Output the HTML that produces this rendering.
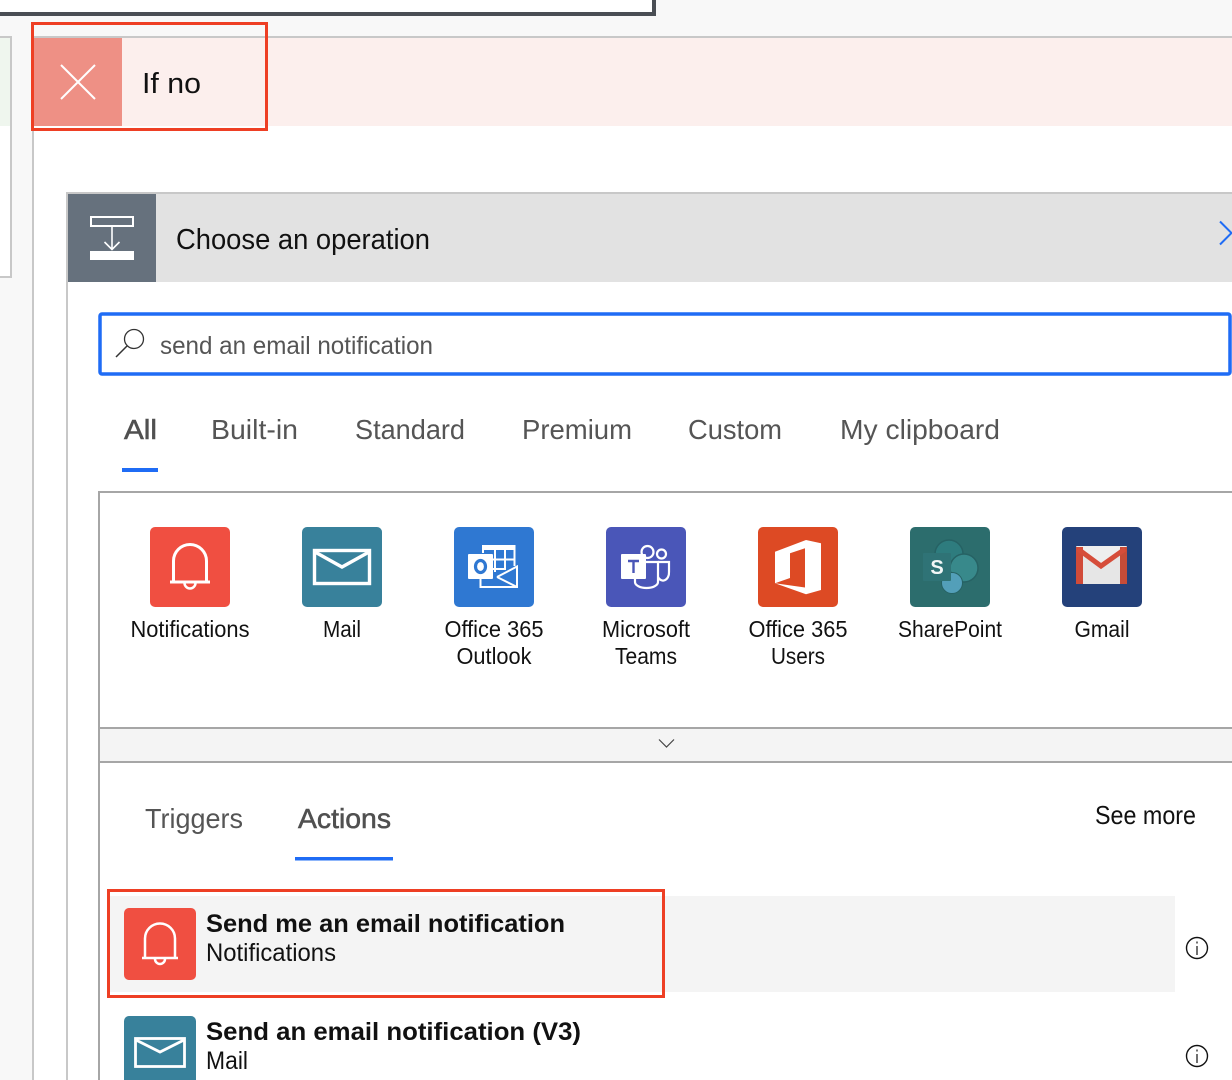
<!DOCTYPE html>
<html><head><meta charset="utf-8"><style>
html,body{margin:0;padding:0;background:#fff;width:1232px;height:1080px;overflow:hidden}
svg{display:block}
text{font-family:"Liberation Sans",sans-serif;fill:#111}
.g{fill:#555}
.sb{fill:#505050;stroke:#505050;stroke-width:.55}
.i{fill:none;stroke:#fff;stroke-width:3}
</style></head><body>
<svg width="1232" height="1080" viewBox="0 0 1232 1080" xmlns="http://www.w3.org/2000/svg">
<rect width="1232" height="1080" fill="#fff"/>
<!-- canvas -->
<rect x="0" y="16" width="34" height="1064" fill="#f8f8f8"/>
<rect x="0" y="16" width="1232" height="22" fill="#f8f8f8"/>
<rect x="656" y="0" width="576" height="38" fill="#f8f8f8"/>
<rect x="0" y="12" width="656" height="4" fill="#4a4e54"/>
<rect x="652" y="0" width="4" height="16" fill="#4a4e54"/>
<!-- left panel -->
<rect x="0" y="38" width="10" height="238" fill="#fff"/>
<rect x="0" y="38" width="10" height="88" fill="#eff6ee"/>
<rect x="0" y="36" width="12" height="2" fill="#c8c8c8"/>
<rect x="10" y="36" width="2" height="242" fill="#c8c8c8"/>
<rect x="0" y="276" width="12" height="2" fill="#c8c8c8"/>
<!-- if no panel -->
<rect x="34" y="38" width="1198" height="1042" fill="#fff"/>
<rect x="34" y="38" width="1198" height="88" fill="#fcefed"/>
<rect x="32" y="36" width="1200" height="2" fill="#c8c8c8"/>
<rect x="32" y="36" width="2" height="1044" fill="#c8c8c8"/>
<rect x="34" y="38" width="88" height="88" fill="#ee9085"/>
<path d="M61 65L95 99M95 65L61 99" stroke="#fff" stroke-width="2" fill="none"/>
<text x="142" y="93" font-size="29" textLength="59" lengthAdjust="spacingAndGlyphs">If no</text>
<!-- operation card -->
<rect x="66" y="192" width="1166" height="2" fill="#c8c8c8"/>
<rect x="66" y="192" width="2" height="888" fill="#c8c8c8"/>
<rect x="68" y="194" width="1164" height="88" fill="#e2e2e2"/>
<rect x="68" y="194" width="88" height="88" fill="#66717d"/>
<rect x="91" y="217" width="42" height="9" fill="none" stroke="#fff" stroke-width="2"/>
<path d="M112 227V249M104.500 242L112 249.500L119.500 242" fill="none" stroke="#fff" stroke-width="1.600"/>
<rect x="90" y="251" width="44" height="9" fill="#fff"/>
<text x="176" y="249" font-size="29" textLength="254" lengthAdjust="spacingAndGlyphs">Choose an operation</text>
<path d="M1220 221.500L1231.500 233L1220 244.500" fill="none" stroke="#1f6cf5" stroke-width="2"/>
<!-- search -->
<rect x="100" y="314" width="1130" height="60" rx="2" fill="#fff" stroke="#1f6cf5" stroke-width="3.500"/>
<circle cx="134" cy="339" r="9.500" fill="none" stroke="#333" stroke-width="1.300"/>
<path d="M127 346L116 357" stroke="#333" stroke-width="1.500" fill="none"/>
<text x="160" y="354" font-size="25" class="g" textLength="273" lengthAdjust="spacingAndGlyphs">send an email notification</text>
<!-- tabs -->
<text x="124" y="439" font-size="28" class="sb" textLength="33" lengthAdjust="spacingAndGlyphs">All</text>
<rect x="122" y="468" width="36" height="4" fill="#1f6cf5"/>
<text x="211" y="439" font-size="28" class="g" textLength="87" lengthAdjust="spacingAndGlyphs">Built-in</text>
<text x="355" y="439" font-size="28" class="g" textLength="110" lengthAdjust="spacingAndGlyphs">Standard</text>
<text x="522" y="439" font-size="28" class="g" textLength="110" lengthAdjust="spacingAndGlyphs">Premium</text>
<text x="688" y="439" font-size="28" class="g" textLength="94" lengthAdjust="spacingAndGlyphs">Custom</text>
<text x="840" y="439" font-size="28" class="g" textLength="160" lengthAdjust="spacingAndGlyphs">My clipboard</text>
<!-- connector box -->
<rect x="98" y="491" width="1134" height="2" fill="#a6a6a6"/>
<rect x="98" y="491" width="2" height="589" fill="#a6a6a6"/>
<rect x="100" y="729" width="1132" height="33" fill="#f4f4f4"/>
<rect x="100" y="727" width="1132" height="2" fill="#a6a6a6"/>
<rect x="100" y="761" width="1132" height="2" fill="#a6a6a6"/>
<path d="M659 739.500L666.500 747L674 739.500" fill="none" stroke="#444" stroke-width="1.200"/>

<!-- notifications -->
<rect x="150" y="527" width="80" height="80" rx="5" fill="#f04f41"/>
<path d="M173.500 581V561a16.500 16.500 0 0 1 33 0V581" class="i"/><path d="M170 582H210" class="i"/><path d="M184.500 583a5.500 5.500 0 0 0 11 0" class="i" style="stroke-width:2.500"/>
<text x="190" y="637" font-size="23" text-anchor="middle" textLength="119" lengthAdjust="spacingAndGlyphs">Notifications</text>
<!-- mail -->
<rect x="302" y="527" width="80" height="80" rx="5" fill="#38819b"/>
<rect x="314.500" y="550.500" width="55" height="33" class="i" style="stroke-width:3.400"/>
<path d="M315 552L342 567L369 552" class="i" style="stroke-width:3.400"/>
<text x="342" y="637" font-size="23" text-anchor="middle" textLength="38" lengthAdjust="spacingAndGlyphs">Mail</text>
<!-- outlook -->
<rect x="454" y="527" width="80" height="80" rx="5" fill="#2f78d2"/>
<path d="M483 553V546H514.500V566" fill="none" stroke="#fff" stroke-width="2"/>
<rect x="483" y="546" width="31" height="4" fill="#fff"/>
<path d="M495 549V572M505 549V570M490 559.500H514M490 569H505" stroke="#fff" stroke-width="2" fill="none"/>
<rect x="468" y="554" width="25" height="25" rx="1" fill="#fff"/>
<ellipse cx="480.500" cy="566.500" rx="5" ry="6" fill="none" stroke="#2f78d2" stroke-width="3.200"/>
<path d="M480.500 579V587H517V566.500L497 577" fill="none" stroke="#fff" stroke-width="2"/>
<path d="M497 577L517 587" fill="none" stroke="#fff" stroke-width="2"/>
<text x="494" y="637" font-size="23" text-anchor="middle" textLength="99" lengthAdjust="spacingAndGlyphs">Office 365</text>
<text x="494" y="664" font-size="23" text-anchor="middle" textLength="75" lengthAdjust="spacingAndGlyphs">Outlook</text>
<!-- teams -->
<rect x="606" y="527" width="80" height="80" rx="5" fill="#4a56b8"/>
<circle cx="647.500" cy="552" r="6" fill="none" stroke="#fff" stroke-width="2.200"/>
<circle cx="661.500" cy="554" r="4.500" fill="none" stroke="#fff" stroke-width="2.200"/>
<path d="M635 579V582a11.500 6 0 0 0 23 0V562H640" fill="none" stroke="#fff" stroke-width="2.200"/>
<path d="M658 562H669V572a6 8 0 0 1 -11 5" fill="none" stroke="#fff" stroke-width="2.200"/>
<rect x="621" y="554" width="25" height="25" rx="1" fill="#fff"/>
<path d="M628 561H639M633.500 561V573" stroke="#4a56b8" stroke-width="2.400" fill="none"/>
<text x="646" y="637" font-size="23" text-anchor="middle" textLength="88" lengthAdjust="spacingAndGlyphs">Microsoft</text>
<text x="646" y="664" font-size="23" text-anchor="middle" textLength="62" lengthAdjust="spacingAndGlyphs">Teams</text>
<!-- office -->
<rect x="758" y="527" width="80" height="80" rx="5" fill="#dd4a24"/>
<path fill-rule="evenodd" fill="#fff" d="M775 551.700L806 540L821 543.300V590L806 594.300L775 583.300ZM790 553.300L805 548.300V587.500L775 583.300L790 578Z"/>
<text x="798" y="637" font-size="23" text-anchor="middle" textLength="99" lengthAdjust="spacingAndGlyphs">Office 365</text>
<text x="798" y="664" font-size="23" text-anchor="middle" textLength="54" lengthAdjust="spacingAndGlyphs">Users</text>
<!-- sharepoint -->
<rect x="910" y="527" width="80" height="80" rx="5" fill="#2c6d6d"/>
<circle cx="949" cy="554" r="14" fill="#2e7c7e" stroke="#266264" stroke-width="1.500"/>
<circle cx="964" cy="568" r="14" fill="#38898b" stroke="#266264" stroke-width="1.500"/>
<circle cx="952" cy="583" r="10.500" fill="#539fb9" stroke="#266264" stroke-width="1"/>
<rect x="923" y="553" width="28" height="28" rx="1" fill="#2f7376"/>
<text x="937" y="574" font-size="20" font-weight="bold" text-anchor="middle" style="fill:#f2f7f7">S</text>
<text x="950" y="637" font-size="23" text-anchor="middle" textLength="104" lengthAdjust="spacingAndGlyphs">SharePoint</text>
<!-- gmail -->
<rect x="1062" y="527" width="80" height="80" rx="5" fill="#24417a"/>
<rect x="1076" y="546" width="51" height="38" rx="1.500" fill="#e6e6e6"/>
<path d="M1076 546H1127L1101.500 566Z" fill="#eeeeee"/>
<rect x="1076" y="547" width="7" height="37" fill="#d14b39"/>
<rect x="1120" y="547" width="7" height="37" fill="#c64c38"/>
<path d="M1078 549L1101 566L1125 549" fill="none" stroke="#d64d3a" stroke-width="5"/>
<text x="1102" y="637" font-size="23" text-anchor="middle" textLength="55" lengthAdjust="spacingAndGlyphs">Gmail</text>

<!-- triggers/actions -->
<text x="145" y="828" font-size="28" class="g" textLength="98" lengthAdjust="spacingAndGlyphs">Triggers</text>
<text x="298" y="828" font-size="28" class="sb" textLength="93" lengthAdjust="spacingAndGlyphs">Actions</text>
<rect x="295" y="857" width="98" height="3.500" fill="#1f6cf5"/>
<text x="1095" y="824" font-size="26" textLength="101" lengthAdjust="spacingAndGlyphs">See more</text>

<!-- rows -->
<rect x="108" y="896" width="1067" height="96" fill="#f4f4f4"/>
<rect x="124" y="908" width="72" height="72" rx="5" fill="#f04f41"/>
<path d="M145 957V938.500a15 15 0 0 1 30 0V957" class="i" style="stroke-width:2.500"/><path d="M142 958H178" class="i" style="stroke-width:2.500"/><path d="M155 959a5 5 0 0 0 10 0" class="i" style="stroke-width:2.500"/>
<text x="206" y="932" font-size="25" font-weight="bold" textLength="359" lengthAdjust="spacingAndGlyphs">Send me an email notification</text>
<text x="206" y="961" font-size="25" textLength="130" lengthAdjust="spacingAndGlyphs">Notifications</text>
<circle cx="1197" cy="948" r="10.500" fill="none" stroke="#111" stroke-width="1.400"/>
<path d="M1197 946V955M1197 941.500V943.500" stroke="#111" stroke-width="1.200"/>
<rect x="124" y="1016" width="72" height="72" rx="5" fill="#38819b"/>
<rect x="135.500" y="1038.500" width="49" height="28" class="i" style="stroke-width:2.800"/>
<path d="M136 1040L160 1052L184 1040" class="i" style="stroke-width:2.800"/>
<text x="206" y="1040" font-size="25" font-weight="bold" textLength="375" lengthAdjust="spacingAndGlyphs">Send an email notification (V3)</text>
<text x="206" y="1069" font-size="25" textLength="42" lengthAdjust="spacingAndGlyphs">Mail</text>
<circle cx="1197" cy="1056" r="10.500" fill="none" stroke="#111" stroke-width="1.400"/>
<path d="M1197 1054V1063M1197 1049.500V1051.500" stroke="#111" stroke-width="1.200"/>

<!-- red annotations -->
<rect x="32.500" y="23.500" width="234" height="106" fill="none" stroke="#ee3f24" stroke-width="3"/>
<rect x="108.500" y="890.500" width="555" height="106" fill="none" stroke="#ee3f24" stroke-width="3"/>
</svg>
</body></html>
